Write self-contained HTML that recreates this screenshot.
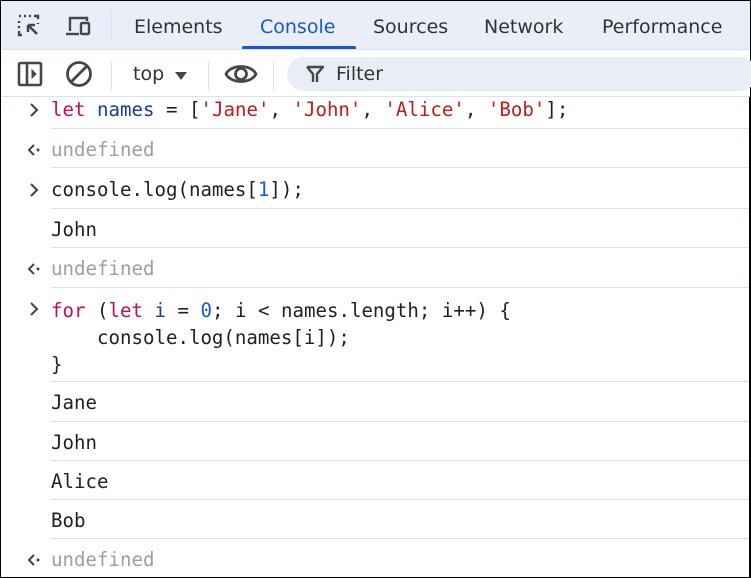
<!DOCTYPE html>
<html><head><style>
*{margin:0;padding:0;box-sizing:border-box}
html,body{width:751px;height:578px;overflow:hidden;background:#fff}
body{position:relative;border:1px solid #000;border-right-width:2px;font-family:"DejaVu Sans","Liberation Sans",sans-serif}
.tabs{position:absolute;left:0;top:0;width:749px;height:49px;background:#e9eef8;border-bottom:1px solid #d3e3fd}
.tab{position:absolute;top:15px;font-size:19px;color:#333}
.tb{position:absolute;left:0;top:49px;width:749px;height:47px;background:#fff;border-bottom:1px solid #d3e3fd}
.sep{position:absolute;width:1px;background:#d3e3fd}
.row{position:absolute;left:0;width:749px;font-family:"DejaVu Sans Mono","Liberation Mono",monospace;font-size:19.1px;color:#202124;white-space:pre}
.row .t{position:absolute;left:50px;top:1px}
.line{position:absolute;left:50px;right:0;height:1px;background:#d3e3fd}
.k{color:#c80a5a}.v{color:#1a3ba6}.s{color:#c41a16}.n{color:#1a56d6}.u{color:#9aa0a6}
.p{position:absolute;left:27px;top:5px}
</style></head><body>
<div class="tabs">
<svg style="position:absolute;left:16px;top:13px" width="26" height="26" viewBox="0 0 26 26" fill="none" stroke="#474747" stroke-width="2.4"><path d="M2 2h2M7 2h2M12 2h2M17 2h4v3M2 7v2M2 12v2M2 17v4h3M21 9v1"/><path d="M11 11l9 9M11 11h7M11 11v7" stroke-width="2.6"/></svg>
<svg style="position:absolute;left:64px;top:14px" width="30" height="24" viewBox="0 0 30 24" fill="none" stroke="#474747" stroke-width="2.4"><path d="M5 16V3h17v3"/><path d="M1 19h13"/><rect x="16" y="8" width="8" height="11" rx="1"/></svg>
<div class="sep" style="left:110px;top:10px;height:28px"></div>
<div class="tab" style="left:133px">Elements</div>
<div class="tab" style="left:259px;color:#1a56d0">Console</div>
<div style="position:absolute;left:241px;top:45px;width:114px;height:3px;background:#1a56d0;border-radius:2px 2px 0 0"></div>
<div class="tab" style="left:372px">Sources</div>
<div class="tab" style="left:483px">Network</div>
<div class="tab" style="left:601px">Performance</div>
</div>
<div class="tb">
<svg style="position:absolute;left:16px;top:11px" width="26" height="26" viewBox="0 0 26 26" fill="none" stroke="#474747" stroke-width="2.6"><rect x="2" y="2" width="22" height="22" rx="1.5"/><path d="M10 2v22"/><path d="M15 9l4 4-4 4z" fill="#474747" stroke-width="1"/></svg>
<svg style="position:absolute;left:64px;top:10px" width="28" height="28" viewBox="0 0 28 28" fill="none" stroke="#474747" stroke-width="2.8"><circle cx="14" cy="14" r="11.5"/><path d="M6 22L22 6"/></svg>
<div class="sep" style="left:110px;top:12px;height:28px"></div>
<div style="position:absolute;left:132px;top:13px;font-size:19px;color:#333">top</div>
<svg style="position:absolute;left:173px;top:21px" width="14" height="10"><path d="M1 1h12L7 9z" fill="#474747"/></svg>
<div class="sep" style="left:207px;top:12px;height:28px"></div>
<svg style="position:absolute;left:223px;top:11px" width="34" height="26" viewBox="0 0 34 26" fill="none" stroke="#474747" stroke-width="2.8"><path d="M2 13C7 3 27 3 32 13C27 23 7 23 2 13z"/><circle cx="17" cy="13" r="5.5"/></svg>
<div class="sep" style="left:272px;top:12px;height:28px"></div>
<div style="position:absolute;left:286px;top:7px;width:470px;height:34px;border-radius:17px;background:#e9eef6"></div>
<svg style="position:absolute;left:305px;top:15px" width="18" height="18" viewBox="0 0 18 18" fill="none" stroke="#474747" stroke-width="2.4"><path d="M1 2h16l-6 7v8M1 2l6 7v8"/></svg>
<div style="position:absolute;left:335px;top:13px;font-size:19px;color:#333">Filter</div>
</div>

<div class="row" style="top:96px;height:31px"><svg class="p" width="12" height="16" viewBox="0 0 12 16"><path d="M3 2l6 6-6 6" fill="none" stroke="#444" stroke-width="2"/></svg><span class="t"><span class="k">let</span> <span class="v">names</span> = [<span class="s">'Jane'</span>, <span class="s">'John'</span>, <span class="s">'Alice'</span>, <span class="s">'Bob'</span>];</span></div>
<div class="line" style="top:127px"></div>
<div class="row" style="top:136px"><svg class="p" style="left:25px" width="16" height="16" viewBox="0 0 16 16"><path d="M8 3L3 8l5 5" fill="none" stroke="#444" stroke-width="2"/><circle cx="12" cy="8" r="1.5" fill="#444"/></svg><span class="t u">undefined</span></div>
<div class="line" style="top:166px"></div>
<div class="row" style="top:176px"><svg class="p" width="12" height="16" viewBox="0 0 12 16"><path d="M3 2l6 6-6 6" fill="none" stroke="#444" stroke-width="2"/></svg><span class="t">console.log(names[<span class="n">1</span>]);</span></div>
<div class="line" style="top:207px"></div>
<div class="row" style="top:216px"><span class="t">John</span></div>
<div class="line" style="top:246px"></div>
<div class="row" style="top:255px"><svg class="p" style="left:25px" width="16" height="16" viewBox="0 0 16 16"><path d="M8 3L3 8l5 5" fill="none" stroke="#444" stroke-width="2"/><circle cx="12" cy="8" r="1.5" fill="#444"/></svg><span class="t u">undefined</span></div>
<div class="line" style="top:286px"></div>
<div class="row" style="top:295px;line-height:27px"><svg class="p" width="12" height="16" viewBox="0 0 12 16"><path d="M3 2l6 6-6 6" fill="none" stroke="#444" stroke-width="2"/></svg><span class="t"><span class="k">for</span> (<span class="k">let</span> <span class="v">i</span> = <span class="n">0</span>; i &lt; names.length; i++) {
    console.log(names[i]);
}</span></div>
<div class="line" style="top:380px"></div>
<div class="row" style="top:389px"><span class="t">Jane</span></div>
<div class="line" style="top:420px"></div>
<div class="row" style="top:429px"><span class="t">John</span></div>
<div class="line" style="top:459px"></div>
<div class="row" style="top:468px"><span class="t">Alice</span></div>
<div class="line" style="top:498px"></div>
<div class="row" style="top:507px"><span class="t">Bob</span></div>
<div class="line" style="top:537px"></div>
<div class="row" style="top:546px"><svg class="p" style="left:25px" width="16" height="16" viewBox="0 0 16 16"><path d="M8 3L3 8l5 5" fill="none" stroke="#444" stroke-width="2"/><circle cx="12" cy="8" r="1.5" fill="#444"/></svg><span class="t u">undefined</span></div>
</body></html>
